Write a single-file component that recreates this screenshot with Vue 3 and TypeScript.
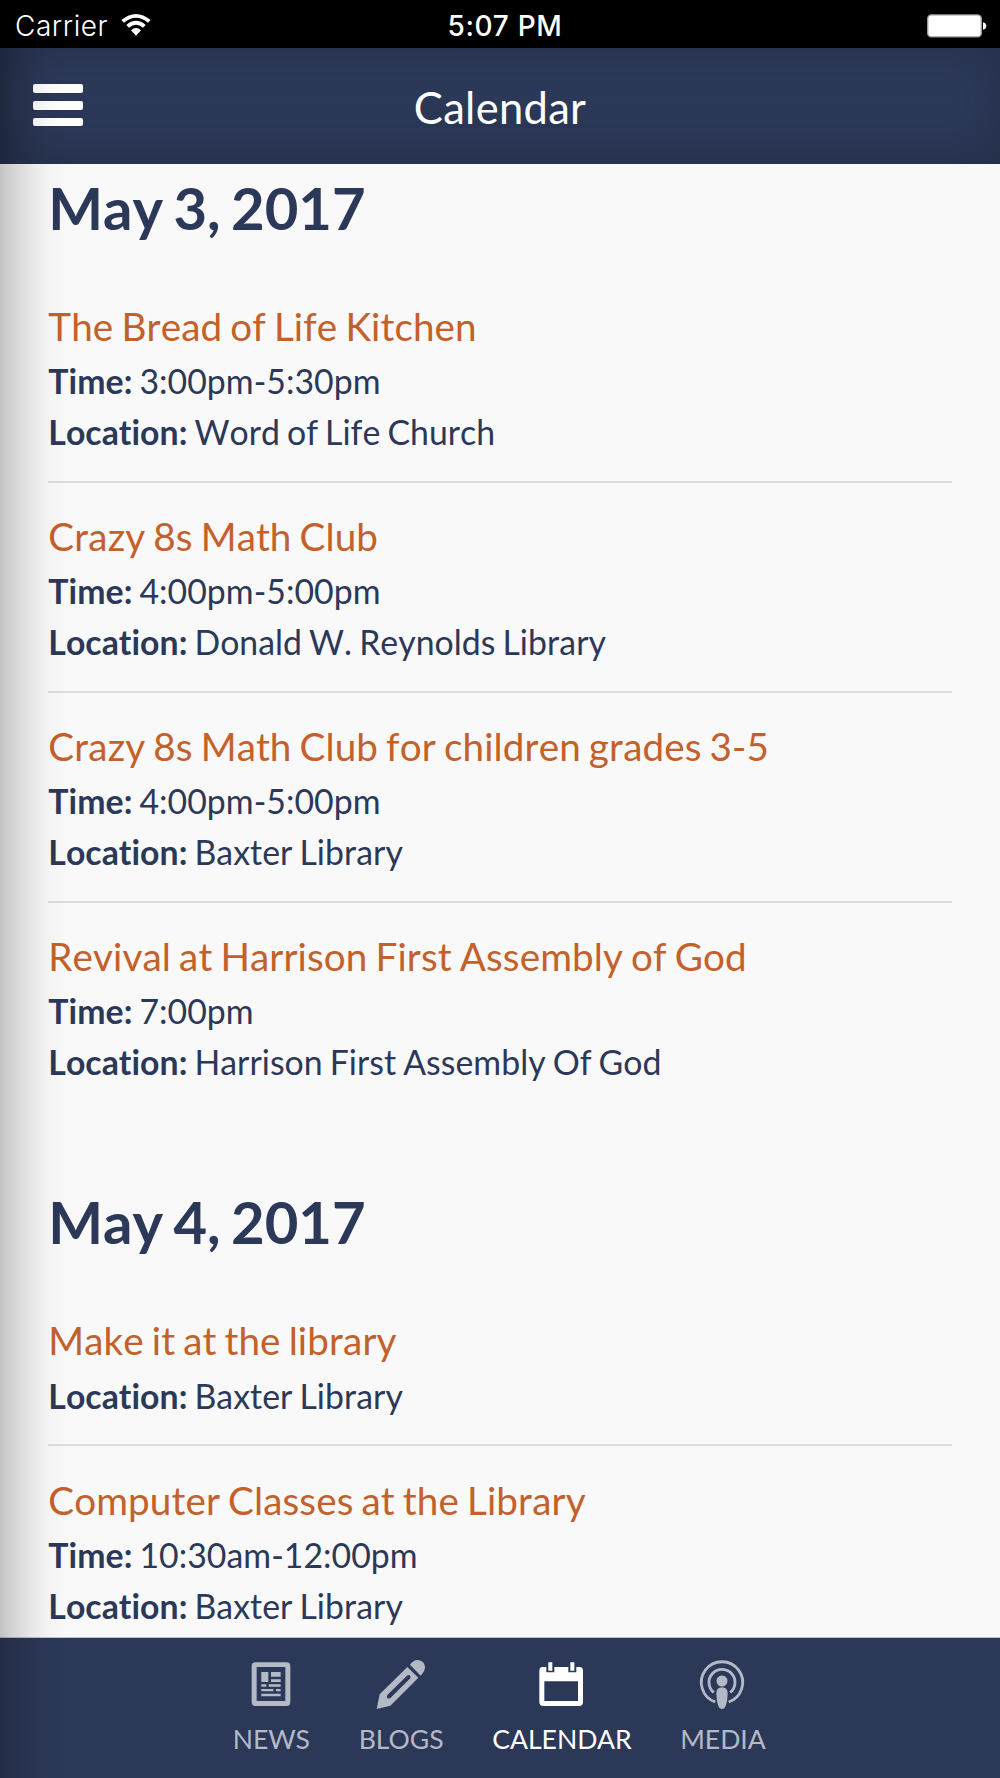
<script setup lang="ts">
interface CalendarEvent {
  title: string
  time?: string
  location: string
}

interface Day {
  date: string
  events: CalendarEvent[]
}

type TabIcon = 'news' | 'blogs' | 'calendar' | 'media'

interface Tab {
  icon: TabIcon
  label: string
}

const days: Day[] = [
  {
    date: 'May 3, 2017',
    events: [
      { title: 'The Bread of Life Kitchen', time: '3:00pm-5:30pm', location: 'Word of Life Church' },
      { title: 'Crazy 8s Math Club', time: '4:00pm-5:00pm', location: 'Donald W. Reynolds Library' },
      { title: 'Crazy 8s Math Club for children grades 3-5', time: '4:00pm-5:00pm', location: 'Baxter Library' },
      { title: 'Revival at Harrison First Assembly of God', time: '7:00pm', location: 'Harrison First Assembly Of God' },
    ],
  },
  {
    date: 'May 4, 2017',
    events: [
      { title: 'Make it at the library', location: 'Baxter Library' },
      { title: 'Computer Classes at the Library', time: '10:30am-12:00pm', location: 'Baxter Library' },
    ],
  },
]

const tabs: Tab[] = [
  { icon: 'news', label: 'NEWS' },
  { icon: 'blogs', label: 'BLOGS' },
  { icon: 'calendar', label: 'CALENDAR' },
  { icon: 'media', label: 'MEDIA' },
]

const activeTab: TabIcon = 'calendar'
</script>

<template>
  <div class="screen">
    <div class="status">
      <div class="status-left">
        <span class="carrier">Carrier</span>
        <svg class="wifi" viewBox="0 0 90 66" width="30" height="22">
          <path d="M1 18Q45-18 89 18L81 26Q45-4 9 26Z" />
          <path d="M16 33Q45 8 74 33L66 41Q45 23 24 41Z" />
          <path d="M30 49Q45 35 60 49L45 65Z" />
        </svg>
      </div>
      <span class="clock">5:07 PM</span>
      <div class="status-right">
        <svg class="battery" viewBox="0 0 60 24" width="60" height="24">
          <rect x="0.7" y="0.9" width="53.6" height="22" rx="3.6" fill="#fff" stroke="#9a9a9a" stroke-width="1.4" />
          <path d="M56 8.3Q59.3 9 59.3 12T56 15.8Z" fill="#fff" />
        </svg>
      </div>
    </div>

    <header class="header">
      <button class="menu" aria-label="Menu">
        <i></i><i></i><i></i>
      </button>
      <h1>Calendar</h1>
    </header>

    <main class="content">
      <section v-for="day in days" :key="day.date" class="day">
        <h2>{{ day.date }}</h2>
        <article v-for="event in day.events" :key="event.title" class="event">
          <h3>{{ event.title }}</h3>
          <p v-if="event.time"><strong>Time:</strong> {{ event.time }}</p>
          <p><strong>Location:</strong> {{ event.location }}</p>
        </article>
      </section>
    </main>

    <nav class="tabs">
      <a v-for="tab in tabs" :key="tab.icon" class="tab" :class="{ active: tab.icon === activeTab }">
        <svg v-if="tab.icon === 'news'" viewBox="0 0 150 150" width="50" height="50">
          <path fill-rule="evenodd" d="M28 7H122Q133 7 133 18V126Q133 138 122 138H28Q17 138 17 126V18Q17 7 28 7ZM32 21V123H118V21Z" />
          <path d="M46 36H67V66H46ZM75 36H104V50H75ZM75 58H104V66H75ZM46 73H61V80H46ZM68 73H104V80H68ZM46 87H82V94H46ZM90 87H104V94H90ZM46 101H104V109H46Z" />
        </svg>
        <svg v-else-if="tab.icon === 'blogs'" viewBox="0 0 150 150" width="50" height="50">
          <path fill-rule="evenodd" d="M2 147L11 103L94 21L127 53L43 137ZM34 105Q30 112 35 115Q39 117 44 113L103 55Q105 49 101 46Q97 44 93 47Z" />
          <path d="M102 14Q115-3 130 1Q145 5 147 21Q147 34 134 47Z" />
        </svg>
        <svg v-else-if="tab.icon === 'calendar'" viewBox="0 0 150 150" width="50" height="50">
          <path fill-rule="evenodd" d="M19 21H31V37H55V21H97V37H121V21H131Q141 22 141 32V126Q141 138 129 138H22Q10 138 10 126V32Q10 22 19 21ZM25 64V123H126V64Z" />
          <path d="M37 7H49V32H37ZM103 7H115V32H103Z" />
        </svg>
        <svg v-else viewBox="0 0 150 150" width="50" height="50">
          <g fill="none" stroke="currentColor" stroke-width="8.5">
            <path d="M55 126A62 62 0 1 1 95 126" />
            <path d="M50.5 97.5A39 39 0 1 1 99.5 97.5" />
          </g>
          <circle cx="75" cy="63" r="16.5" />
          <path d="M75 82Q92 82 92 101Q90 147 75 147T58 101Q58 82 75 82Z" />
        </svg>
        <span>{{ tab.label }}</span>
      </a>
    </nav>

    <div class="edge-shadow"></div>
  </div>
</template>

<style>
body {
  margin: 0;
}
</style>

<style scoped>
.screen {
  position: relative;
  display: flex;
  flex-direction: column;
  width: 1000px;
  height: 1778px;
  overflow: hidden;
  background: #f9f9f9;
  color: #2c3858;
  font-family: Lato, 'Liberation Sans', sans-serif;
  font-variant-ligatures: none;
}

.status {
  flex: none;
  display: grid;
  grid-template-columns: 1fr auto 1fr;
  align-items: center;
  box-sizing: border-box;
  height: 48px;
  padding: 2px 13px 0 15px;
  background: #000;
  color: #fff;
  font-family: Inter, 'Liberation Sans', sans-serif;
  font-size: 28px;
  line-height: 48px;
}

.status-left {
  display: flex;
  align-items: center;
  gap: 13px;
}

.carrier {
  font-weight: 350;
  letter-spacing: 0.55px;
}

.wifi {
  fill: #fff;
  margin-top: -3px;
}

.clock {
  margin-left: 8px;
  font-weight: 500;
  letter-spacing: 0.7px;
}

.status-right {
  display: flex;
  justify-content: flex-end;
}

.header {
  flex: none;
  display: grid;
  grid-template-columns: 83px 1fr 83px;
  align-items: center;
  height: 116px;
  background: #2c3858;
  box-shadow: inset 0 -6px 44px rgba(26, 32, 48, 0.4);
  color: #fff;
}

.menu {
  display: flex;
  flex-direction: column;
  gap: 8px;
  width: 50px;
  margin: -1.4px 0 0 33px;
  padding: 0;
  border: 0;
  background: none;
}

.menu i {
  height: 8.6px;
  border-radius: 2px;
  background: #fff;
}

h1 {
  margin: 2px 0 0;
  font-size: 43.5px;
  font-weight: 400;
  letter-spacing: 0.3px;
  line-height: 60px;
  text-align: center;
}

.content {
  flex: 1;
  min-height: 0;
  overflow: hidden;
  padding: 8.5px 48.3px 0;
  font-kerning: none;
}

.day {
  margin-bottom: 99.6px;
}

h2 {
  margin: 0 0 54.8px;
  font-size: 58px;
  font-weight: 700;
  line-height: 69.6px;
  word-spacing: -0.065em;
}

.event + .event {
  margin-top: 23.2px;
  padding-top: 24.2px;
  border-top: 2px solid #dedede;
}

h3 {
  margin: 0 0 1.4px;
  color: #c4602a;
  font-size: 38.64px;
  font-weight: 400;
  letter-spacing: 0.1px;
  line-height: 58px;
  word-spacing: -0.05em;
}

p {
  margin: 0;
  font-size: 33.81px;
  letter-spacing: 0.04px;
  line-height: 50.6px;
  word-spacing: -0.05em;
}

.tabs {
  flex: none;
  display: flex;
  justify-content: center;
  box-sizing: border-box;
  height: 141px;
  padding-right: 1.6px;
  border-top: 1px solid #bfc2c9;
  background: #2c3858;
  background-clip: padding-box;
}

.tab {
  display: flex;
  flex-direction: column;
  align-items: center;
  padding: 22px 24.3px 0;
  color: #b4b9c6;
  font-size: 26.57px;
  line-height: 32px;
}

.tab svg {
  display: block;
  margin-left: -1px;
  fill: currentColor;
}

.tab span {
  margin-top: 13px;
}

.tab.active {
  color: #fff;
}

.edge-shadow {
  position: absolute;
  top: 48px;
  bottom: 0;
  left: 0;
  width: 68px;
  pointer-events: none;
  background: linear-gradient(
    to right,
    rgba(0, 0, 0, 0.22) 0,
    rgba(0, 0, 0, 0.15) 12px,
    rgba(0, 0, 0, 0.1) 24px,
    rgba(0, 0, 0, 0.055) 36px,
    rgba(0, 0, 0, 0.02) 50px,
    transparent 68px
  );
}
</style>
